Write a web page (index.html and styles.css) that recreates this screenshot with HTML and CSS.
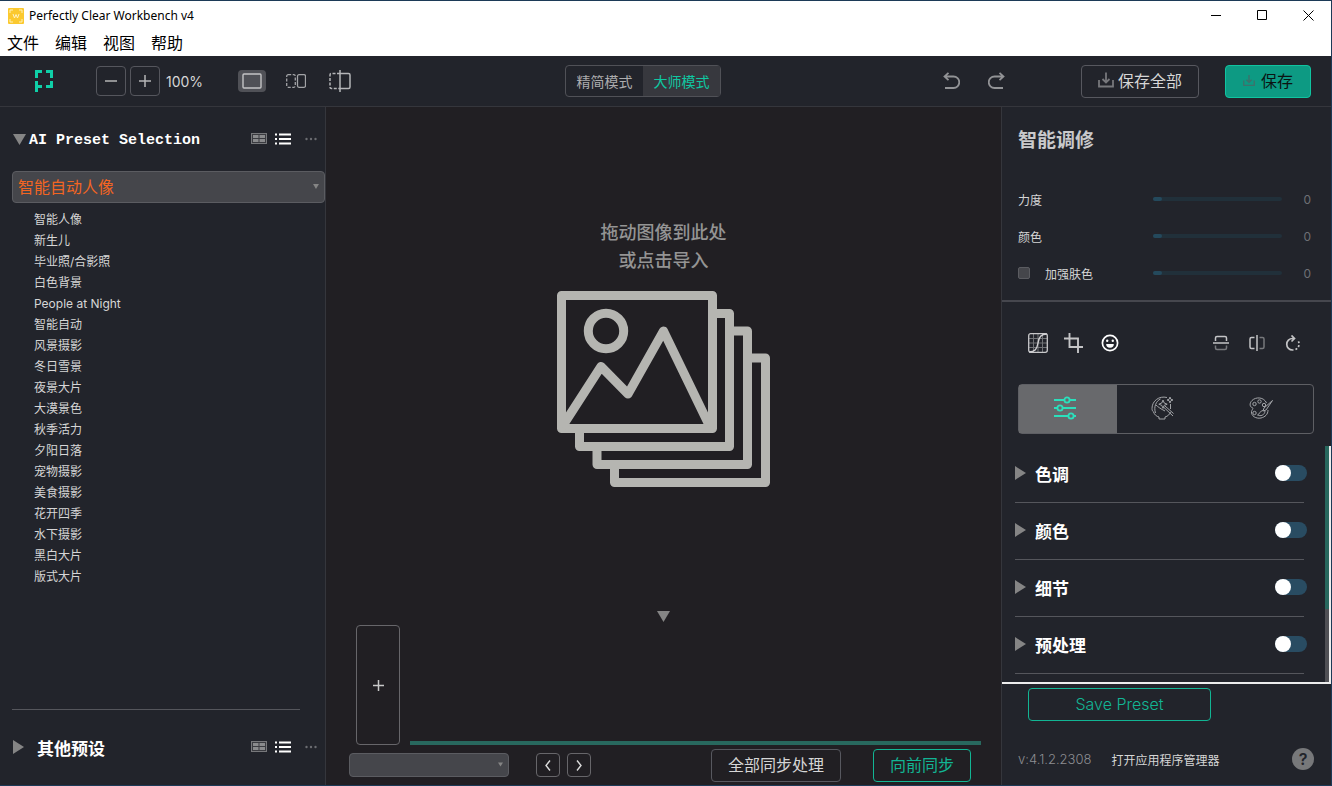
FILE: index.html
```html
<!DOCTYPE html>
<html lang="zh-CN">
<head>
  <meta charset="UTF-8" />
  <meta name="viewport" content="width=device-width, initial-scale=1.0" />
  <title>Perfectly Clear Workbench v4</title>
  <link rel="stylesheet" href="styles.css">
</head>
<body>
  <!-- shared icons -->
  <svg class="defs" aria-hidden="true">
    <symbol id="i-grid" viewBox="0 0 16 12">
      <rect x="0.5" y="0.5" width="15" height="10" fill="#3a3b40" stroke="#77787b" />
      <path d="M2 2h5.500v3H2zM8.500 2H14v3H8.500zM2 6h5.500v3H2zM8.500 6H14v3H8.500z" fill="#8a8b8d" />
    </symbol>
    <symbol id="i-list" viewBox="0 0 16 12">
      <path d="M0 1.500h2M4 1.500h12M0 6h2M4 6h12M0 10.500h2M4 10.500h12" stroke="#fff" stroke-width="2" />
    </symbol>
    <symbol id="i-more" viewBox="0 0 12 4">
      <g fill="#6c6d71"><circle cx="1.500" cy="2" r="1.200" /><circle cx="6" cy="2" r="1.200" /><circle cx="10.500" cy="2" r="1.200" /></g>
    </symbol>
    <symbol id="i-save" viewBox="0 0 16 16">
      <path d="M1 8v6.500h14V8M8 0.500v10M4.500 7L8 10.500 11.500 7" fill="none" stroke="currentColor" stroke-width="1.800" />
    </symbol>
    <symbol id="i-right" viewBox="0 0 11 14"><path d="M0 0l11 7-11 7z" fill="#858585" /></symbol>
    <symbol id="i-down" viewBox="0 0 13 11"><path d="M0 0h13l-6.500 11z" fill="#858585" /></symbol>
  </svg>

  <header class="titlebar">
    <svg class="app-icon" width="16" height="16" viewBox="0 0 16 16">
      <rect width="16" height="16" rx="1" fill="#fbc92f" />
      <path d="M2 5V2h3M11 2h3v3M14 11v3h-3M5 14H2v-3" fill="none" stroke="#fff0b8" />
      <path d="M5 6l1.500 4L8 6.500 9.500 10 11 6" fill="none" stroke="#fff3c8" />
    </svg>
    <h1>Perfectly Clear Workbench v4</h1>
    <div class="window-buttons">
      <button aria-label="最小化"><svg width="11" height="11"><path d="M0 5.500h10" stroke="#000" /></svg></button>
      <button aria-label="最大化"><svg width="11" height="11"><path d="M.5.5h9v9h-9z" fill="none" stroke="#000" /></svg></button>
      <button aria-label="关闭"><svg width="11" height="11"><path d="M.5.5l10 10M10.500.5l-10 10" stroke="#000" /></svg></button>
    </div>
  </header>

  <nav class="menubar">
    <a href="#">文件</a>
    <a href="#">编辑</a>
    <a href="#">视图</a>
    <a href="#">帮助</a>
  </nav>

  <div class="toolbar">
    <div class="tools-left">
      <svg class="logo" width="19" height="23" viewBox="0 0 19 23">
        <path d="M1.500 8V1.500H7M11 1.500h5.500V8M16.500 11v5.500H11M7 16.500H1.500M1.500 11v11" fill="none" stroke="#0fd0a8" stroke-width="3" />
      </svg>
      <div class="zoom">
        <button class="square" aria-label="缩小"><svg width="12" height="12"><path d="M0 6h12" stroke="#b4b4b6" stroke-width="1.500" /></svg></button>
        <button class="square" aria-label="放大"><svg width="12" height="12"><path d="M0 6h12M6 0v12" stroke="#b4b4b6" stroke-width="1.500" /></svg></button>
        <span class="percent">100%</span>
      </div>
      <div class="views">
        <button class="view active" aria-label="单图">
          <svg width="20" height="16"><rect x="1" y="1" width="18" height="14" rx="1" fill="none" stroke="#c4c4c6" stroke-width="1.400" /></svg>
        </button>
        <button class="view" aria-label="并排">
          <svg width="20" height="14" fill="none" stroke="#a2a3a6">
            <rect x="0.700" y="0.700" width="8.600" height="12.600" rx="1.500" stroke-dasharray="3 1.500" stroke-width="1.300" />
            <rect x="11.500" y="0.700" width="8" height="12.600" rx="1.500" stroke-width="1.300" />
          </svg>
        </button>
        <button class="view" aria-label="分割">
          <svg width="22" height="22" fill="none" stroke="#b4b5b8" stroke-width="1.500">
            <path d="M11 3.500H2.500Q1 3.500 1 5v12q0 1.500 1.500 1.500H11" stroke-dasharray="3 1.500" />
            <path d="M11 3.500h8.500Q21 3.500 21 5v12q0 1.500-1.500 1.500H11M11 0v22" />
          </svg>
        </button>
      </div>
    </div>

    <div class="mode">
      <button>精简模式</button>
      <button class="active">大师模式</button>
    </div>

    <div class="tools-right">
      <div class="history">
        <button aria-label="撤销">
          <svg width="17" height="18" viewBox="0 0 17 18" fill="none" stroke="#929396" stroke-width="1.800">
            <path d="M1.500 4.500h9a5.700 5.700 0 0 1 0 11.500H2M5.500 .8L1.500 4.500l4 3.700" />
          </svg>
        </button>
        <button aria-label="重做">
          <svg width="17" height="18" viewBox="0 0 17 18" fill="none" stroke="#929396" stroke-width="1.800">
            <path d="M15.500 4.500h-9a5.700 5.700 0 0 0 0 11.500H15M11.500 .8l4 3.700-4 3.700" />
          </svg>
        </button>
      </div>
      <button class="btn save-all"><svg width="16" height="16"><use href="#i-save" /></svg>保存全部</button>
      <button class="btn save"><svg width="12" height="13"><use href="#i-save" /></svg>保存</button>
    </div>
  </div>

  <div class="workspace">
    <aside class="presets">
      <div class="group-head">
        <button class="toggle"><svg width="13" height="11"><use href="#i-down" /></svg><span class="mono">AI Preset Selection</span></button>
        <div class="group-tools">
          <button aria-label="网格"><svg width="16" height="12"><use href="#i-grid" /></svg></button>
          <button aria-label="列表"><svg width="16" height="12"><use href="#i-list" /></svg></button>
          <button aria-label="更多"><svg width="12" height="4"><use href="#i-more" /></svg></button>
        </div>
      </div>
      <div class="select preset-select">
        <select aria-label="预设分组"><option>智能自动人像</option></select>
        <svg width="6" height="5"><use href="#i-down" /></svg>
      </div>
      <ul class="preset-list">
        <li>智能人像</li>
        <li>新生儿</li>
        <li>毕业照/合影照</li>
        <li>白色背景</li>
        <li>People at Night</li>
        <li>智能自动</li>
        <li>风景摄影</li>
        <li>冬日雪景</li>
        <li>夜景大片</li>
        <li>大漠景色</li>
        <li>秋季活力</li>
        <li>夕阳日落</li>
        <li>宠物摄影</li>
        <li>美食摄影</li>
        <li>花开四季</li>
        <li>水下摄影</li>
        <li>黑白大片</li>
        <li>版式大片</li>
      </ul>
      <div class="group-head other">
        <button class="toggle"><svg width="11" height="14"><use href="#i-right" /></svg><span>其他预设</span></button>
        <div class="group-tools">
          <button aria-label="网格"><svg width="16" height="12"><use href="#i-grid" /></svg></button>
          <button aria-label="列表"><svg width="16" height="12"><use href="#i-list" /></svg></button>
          <button aria-label="更多"><svg width="12" height="4"><use href="#i-more" /></svg></button>
        </div>
      </div>
    </aside>

    <main class="stage">
      <div class="dropzone">
        <p>拖动图像到此处<br>或点击导入</p>
        <svg width="213" height="196" viewBox="0 0 213 196" fill="none" stroke="#b5b5b1" stroke-width="9" stroke-linejoin="round">
          <path d="M4.500 4.500h151v133H4.500z" />
          <path d="M160 22.500h12.500v133h-150V142M177 40h13.500v133.500H40V160M195 67h13.500v124.500h-151V178" />
          <circle cx="49" cy="40" r="17.700" />
          <path d="M5 136l39-60.500 27 27.500 35.500-63L153 136" />
        </svg>
      </div>
      <button class="collapse" aria-label="收起"><svg width="13" height="11"><use href="#i-down" /></svg></button>
      <div class="filmstrip">
        <button class="add" aria-label="添加图像"><svg width="11" height="11"><path d="M0 5.500h11M5.500 0v11" stroke="#c8c8c8" stroke-width="1.500" /></svg></button>
        <div class="strip-bar"></div>
      </div>
      <div class="stage-footer">
        <div class="select filter-select">
          <select aria-label="筛选"><option></option></select>
          <svg width="5" height="5"><use href="#i-down" /></svg>
        </div>
        <div class="pager">
          <button aria-label="上一张"><svg width="6" height="11"><path d="M5 .5l-4 5 4 5" fill="none" stroke="#dcdcdc" stroke-width="1.400" /></svg></button>
          <button aria-label="下一张"><svg width="6" height="11"><path d="M1 .5l4 5-4 5" fill="none" stroke="#dcdcdc" stroke-width="1.400" /></svg></button>
        </div>
        <div class="sync">
          <button class="btn sync-all">全部同步处理</button>
          <button class="btn outline sync-next">向前同步</button>
        </div>
      </div>
    </main>

    <aside class="adjust">
      <section class="smart">
        <h2>智能调修</h2>
        <div class="slider-row">
          <label for="strength">力度</label>
          <input type="range" id="strength" min="0" max="100" value="0">
          <output>0</output>
        </div>
        <div class="slider-row">
          <label for="color">颜色</label>
          <input type="range" id="color" min="0" max="100" value="0">
          <output>0</output>
        </div>
        <div class="slider-row">
          <label class="check"><input type="checkbox">加强肤色</label>
          <input type="range" aria-label="加强肤色" min="0" max="100" value="0">
          <output>0</output>
        </div>
      </section>

      <div class="edit-tools">
        <button aria-label="曲线">
          <svg width="20" height="20" fill="none">
            <path d="M5.500 1v18M10 1v18M14.500 1v18M1 5.500h18M1 10h18M1 14.500h18" stroke="#707276" />
            <rect x="0.700" y="0.700" width="18.600" height="18.600" rx="2" stroke="#c8c8ca" stroke-width="1.300" />
            <path d="M1 19c6 0 8-3 9-9s3-9 9-9" stroke="#d0d0d2" stroke-width="1.400" />
          </svg>
        </button>
        <button aria-label="裁剪">
          <svg width="20" height="20" fill="none" stroke="#c4c4c6" stroke-width="1.900"><path d="M0 5.500h14V20M5.500 0v14H19" /></svg>
        </button>
        <button aria-label="面部">
          <svg width="18" height="18">
            <circle cx="9" cy="9" r="7.600" fill="none" stroke="#fff" stroke-width="1.700" />
            <path d="M5.200 10h7.600a3.800 3.800 0 0 1-7.600 0z" fill="#fff" />
            <circle cx="6.200" cy="6.800" r="1.200" fill="#fff" /><circle cx="11.800" cy="6.800" r="1.200" fill="#fff" />
          </svg>
        </button>
        <span class="spacer"></span>
        <button aria-label="垂直翻转">
          <svg width="16" height="16" fill="none" stroke-width="1.500">
            <path d="M2.500 6V3q0-1.500 1.500-1.500h8q1.500 0 1.500 1.500v3M0 8h16" stroke="#c4c4c6" />
            <path d="M2.500 10.500v2.500q0 1.500 1.500 1.500h8q1.500 0 1.500-1.500v-2.500" stroke="#77787c" />
          </svg>
        </button>
        <button aria-label="水平翻转">
          <svg width="16" height="16" fill="none" stroke-width="1.500">
            <path d="M5.500 2.500H2.500Q1 2.500 1 4v8q0 1.500 1.500 1.500h3M8 0v16" stroke="#c4c4c6" />
            <path d="M10.500 2.500h3Q15 2.500 15 4v8q0 1.500-1.500 1.500h-3" stroke="#77787c" />
          </svg>
        </button>
        <button aria-label="旋转">
          <svg width="16" height="17" fill="none" stroke="#c4c4c6" stroke-width="1.700">
            <path d="M9 3.500H7.500a5.700 5.700 0 0 0 0 11.500h1M6.500 .5l3 3-3 3" />
            <path d="M10.500 14.500a6 6 0 0 0 2-9.500" stroke-dasharray="2 1.800" />
          </svg>
        </button>
      </div>

      <div class="tabs">
        <button class="active" aria-label="调整">
          <svg width="24" height="24" fill="none" stroke="#2be0bc" stroke-width="1.800">
            <path d="M1 4h10M17 4h6M1 12h3M10 12h13M1 20h14M21 20h2" />
            <circle cx="14" cy="4" r="2.600" /><circle cx="7" cy="12" r="2.600" /><circle cx="18" cy="20" r="2.600" />
          </svg>
        </button>
        <button aria-label="美颜">
          <svg width="24" height="24" fill="none" stroke="#a2a4a8">
            <path d="M16 1.500C8-.5 1 5 1 12.500c0 2 .8 3 1.600 3.500.6 2.500 3 4.500 5.400 5v2h6v-2c3-.8 4.500-2.500 5.500-5" />
            <path d="M4.500 17C2.500 11 5 5 9.500 3M5 9c2 2 5 4 9 6M19.500 8v5" />
            <path d="M12.500 11l9.500 9M14 10l8.500 7.500" />
            <path d="M12 4l1.200 3 3 1.200-3 1.200-1.200 3-1.200-3-3-1.200 3-1.200zM19 1l.8 2.200 2.200.8-2.200.8-.8 2.200-.8-2.200-2.200-.8 2.200-.8z" />
          </svg>
        </button>
        <button aria-label="风格">
          <svg width="24" height="24" fill="none" stroke="#a2a4a8">
            <path d="M17.500 7C15 1 7 .5 3 4.500 0 7.500 1 11 3 11.500c2 .5 0 2-.5 4C2 20 7 23 12 22c4-1 7-3.500 7-8" />
            <path d="M23.500 4.500L15 12l-1 3 3-1zM14 14.500c-3 0-3 3.500-5.500 4.500 3 1.500 7 .5 7.500-4" />
            <circle cx="5.500" cy="8" r="1.700" /><circle cx="10.500" cy="5.500" r="1.700" /><circle cx="15" cy="9" r="1.700" /><circle cx="5.500" cy="17" r="1.700" />
          </svg>
        </button>
      </div>

      <div class="sections">
        <ul>
          <li><label for="tone"><svg width="11" height="14"><use href="#i-right" /></svg>色调</label><input type="checkbox" class="switch" id="tone"></li>
          <li><label for="hue"><svg width="11" height="14"><use href="#i-right" /></svg>颜色</label><input type="checkbox" class="switch" id="hue"></li>
          <li><label for="detail"><svg width="11" height="14"><use href="#i-right" /></svg>细节</label><input type="checkbox" class="switch" id="detail"></li>
          <li><label for="prep"><svg width="11" height="14"><use href="#i-right" /></svg>预处理</label><input type="checkbox" class="switch" id="prep"></li>
        </ul>
        <div class="scrollbar"><div class="thumb"></div></div>
      </div>

      <footer class="adjust-footer">
        <button class="btn outline save-preset">Save Preset</button>
        <div class="about">
          <span class="version">v:4.1.2.2308</span>
          <a href="#">打开应用程序管理器</a>
          <button class="help" aria-label="帮助">?</button>
        </div>
      </footer>
    </aside>
  </div>
</body>
</html>
```
FILE: styles.css
```css
* {
  box-sizing: border-box;
}

body {
  margin: 0;
  min-height: 100vh;
  display: flex;
  flex-direction: column;
  background-color: #22242b;
  border: 1px solid #1c3a57;
  border-width: 1px 1px 1px 0;
  color: #d6d6d6;
  font-family: Inter, "Noto Sans CJK SC", sans-serif;
  font-size: 12px;
}

button, select, input {
  font: inherit;
  color: inherit;
  margin: 0;
}

button {
  background: none;
  border: 0;
  padding: 0;
  display: flex;
  align-items: center;
  justify-content: center;
}

svg {
  display: block;
  flex: none;
}

a {
  color: inherit;
  text-decoration: none;
}

ul {
  list-style: none;
  margin: 0;
  padding: 0;
}

.defs {
  position: absolute;
  width: 0;
  height: 0;
}

/* title and menu */
.titlebar {
  display: flex;
  align-items: center;
  height: 29px;
  padding-left: 8px;
  background-color: #fff;
  color: #000;
}

.titlebar h1 {
  flex: 1;
  margin: 0 0 0 5px;
  font: 12px "Noto Sans", sans-serif;
}

.window-buttons {
  display: flex;
}

.window-buttons button {
  width: 46px;
  height: 29px;
}

.menubar {
  display: flex;
  gap: 16px;
  height: 26px;
  padding-left: 7px;
  background-color: #fff;
  color: #000;
  font-size: 16px;
  line-height: 26px;
}

/* toolbar */
.toolbar {
  display: flex;
  align-items: center;
  justify-content: space-between;
  height: 51px;
  padding: 0 20px 0 35px;
  border-bottom: 1px solid #35363c;
}

.tools-left,
.tools-right,
.zoom,
.views,
.history {
  display: flex;
  align-items: center;
}

.zoom {
  gap: 4px;
  margin-left: 42px;
}

.square {
  width: 30px;
  height: 30px;
  border: 1px solid #55565d;
  border-radius: 4px;
}

.percent {
  width: 40px;
  padding-left: 2px;
  font-size: 14px;
}

.views {
  gap: 16px;
  margin-left: 34px;
}

.view {
  width: 28px;
  height: 22px;
  border-radius: 4px;
}

.view.active {
  background-color: #505157;
}

.mode {
  display: flex;
  height: 32px;
  margin-right: 2px;
  border: 1px solid #505157;
  border-radius: 4px;
  font-size: 14px;
  color: #acacae;
}

.mode button {
  width: 77px;
}

.mode .active {
  background-color: #37383e;
  color: #0fc8a2;
}

.history {
  gap: 11px;
  margin-right: 68px;
}

.history button {
  width: 34px;
  height: 32px;
}

.btn {
  height: 33px;
  gap: 4px;
  padding-bottom: 2px;
  border: 1px solid #57585f;
  border-radius: 4px;
  font-size: 16px;
}

.btn svg {
  color: #77787c;
}

.btn.outline {
  border-color: #12b594;
  color: #12b594;
}

.save-all {
  width: 118px;
}

.save {
  width: 86px;
  margin-left: 26px;
  gap: 6px;
  background-color: #0d9a83;
  border-color: #10c4a0;
  color: #0b1413;
}

.save svg {
  color: #3e716b;
}

/* main area */
.workspace {
  flex: 1;
  display: flex;
}

.presets {
  display: flex;
  flex-direction: column;
  width: 326px;
  border-right: 1px solid #35363c;
}

.group-head {
  display: flex;
  align-items: center;
  justify-content: space-between;
  height: 64px;
  padding: 0 8px 0 13px;
}

.toggle {
  color: #fff;
  font-size: 17px;
  font-weight: 700;
  gap: 3px;
}

.mono {
  padding-top: 2px;
  font-family: "Liberation Mono", monospace;
  font-size: 15px;
}

.group-tools {
  display: flex;
  align-items: center;
  gap: 8px;
}

.group-tools button:last-child {
  margin-left: 6px;
}

.select {
  position: relative;
}

.select select {
  width: 100%;
  height: 100%;
  appearance: none;
  background-color: #45464b;
  border: 1px solid #5b5c61;
  border-radius: 4px;
}

.select svg {
  position: absolute;
  right: 6px;
  top: 50%;
  margin-top: -3px;
}

.preset-select {
  height: 32px;
  margin-left: 12px;
}

.preset-select select {
  padding: 0 5px;
  color: #f26522;
  font-size: 16px;
}

.preset-list {
  flex: 1;
  padding: 6px 0 0 34px;
  line-height: 21px;
}

.other {
  height: 76px;
  position: relative;
}

.other .toggle {
  gap: 13px;
}

.other::before {
  content: "";
  position: absolute;
  top: 0;
  left: 12px;
  right: 25px;
  height: 1px;
  background-color: #55565c;
}

.stage {
  flex: 1;
  display: flex;
  flex-direction: column;
  background-color: #211f23;
}

.dropzone {
  flex: 1;
  display: flex;
  flex-direction: column;
  align-items: center;
  padding-top: 112px;
}

.dropzone p {
  margin: 0 0 16px;
  color: #949494;
  font-size: 18px;
  font-weight: 500;
  line-height: 28px;
  text-align: center;
}

.collapse {
  align-self: center;
  padding-bottom: 3px;
}

.filmstrip {
  display: flex;
  align-items: flex-end;
  gap: 10px;
  padding: 0 20px 0 30px;
}

.add {
  width: 44px;
  height: 120px;
  border: 1px solid #67666a;
  border-radius: 4px;
}

.strip-bar {
  flex: 1;
  height: 4px;
  background-color: #28685e;
}

.stage-footer {
  display: flex;
  align-items: center;
  height: 40px;
  padding: 0 30px 0 23px;
}

.filter-select {
  width: 160px;
  height: 24px;
}

.pager {
  display: flex;
  gap: 7px;
  margin-left: 27px;
}

.pager button {
  width: 24px;
  height: 24px;
  border: 1px solid #67666a;
  border-radius: 4px;
}

.sync {
  display: flex;
  gap: 32px;
  margin-left: auto;
}

.sync-all {
  width: 130px;
}

.sync-next {
  width: 98px;
}

/* right panel */
.adjust {
  display: flex;
  flex-direction: column;
  width: 330px;
  border-left: 1px solid #35363c;
}

.smart {
  height: 195px;
  padding: 20px 20px 0 16px;
  border-bottom: 2px solid #46474e;
}

.smart h2 {
  margin: 0 0 32px;
  color: #c9c9cb;
  font-family: "Liberation Serif", "Noto Sans CJK SC", serif;
  font-size: 19px;
  font-weight: 700;
  line-height: 28px;
}

.slider-row {
  display: flex;
  align-items: center;
  height: 24px;
  margin-bottom: 13px;
}

.slider-row label {
  flex: 1;
}

.check {
  display: flex;
  align-items: center;
  gap: 15px;
}

.check input {
  width: 12px;
  height: 12px;
  appearance: none;
  background-color: #45464b;
  border: 1px solid #5b5c61;
  border-radius: 2px;
}

input[type="range"] {
  width: 129px;
  height: 4px;
  appearance: none;
  background-color: #21303a;
  border-radius: 2px;
}

input[type="range"]::-webkit-slider-thumb {
  appearance: none;
  width: 9px;
  height: 4px;
  background-color: #24495c;
  border-radius: 2px;
}

output {
  width: 29px;
  color: #6e7075;
  text-align: right;
}

.edit-tools {
  display: flex;
  align-items: center;
  gap: 16px;
  height: 82px;
  padding: 0 28px 0 26px;
}

.edit-tools button {
  width: 20px;
  height: 20px;
}

.spacer {
  flex: 1;
}

.tabs {
  display: flex;
  height: 50px;
  margin: 0 17px 12px 16px;
  border: 1px solid #5e5f64;
  border-radius: 4px;
}

.tabs button {
  flex: 1;
  padding: 0 6px 2px 0;
}

.tabs .active {
  background-color: #68696c;
}

.sections {
  flex: 1;
  display: flex;
  justify-content: space-between;
  border: 2px solid #ededed;
  border-width: 0 2px 2px 0;
}

.sections ul {
  flex: 1;
  padding: 0 18px 0 13px;
}

.sections li {
  display: flex;
  align-items: center;
  justify-content: space-between;
  height: 57px;
  padding-bottom: 3px;
  position: relative;
}

.sections li::after {
  content: "";
  position: absolute;
  bottom: 0;
  left: 0;
  right: 3px;
  height: 1px;
  background-color: #55565c;
}

.sections label {
  display: flex;
  align-items: center;
  gap: 9px;
  color: #fff;
  font-size: 17px;
  font-weight: 700;
}

.switch {
  width: 32px;
  height: 16px;
  appearance: none;
  background-color: #294c62;
  border-radius: 8px;
}

.switch::before {
  content: "";
  display: block;
  width: 16px;
  height: 16px;
  background-color: #fff;
  border-radius: 50%;
}

.scrollbar {
  width: 4px;
  background-color: #505055;
}

.thumb {
  height: 69%;
  background-color: #28685e;
}

.adjust-footer {
  padding: 4px 17px 0 16px;
}

.save-preset {
  width: 183px;
  margin-left: 10px;
  font-weight: 300;
}

.about {
  display: flex;
  align-items: center;
  gap: 20px;
  height: 64px;
  padding-top: 12px;
}

.version {
  color: #8d8e92;
  font-size: 13px;
  font-weight: 300;
}

.help {
  width: 22px;
  height: 22px;
  margin-left: auto;
  border-radius: 50%;
  background-color: #77787a;
  color: #22242b;
  font-size: 16px;
  font-weight: 600;
}
```
